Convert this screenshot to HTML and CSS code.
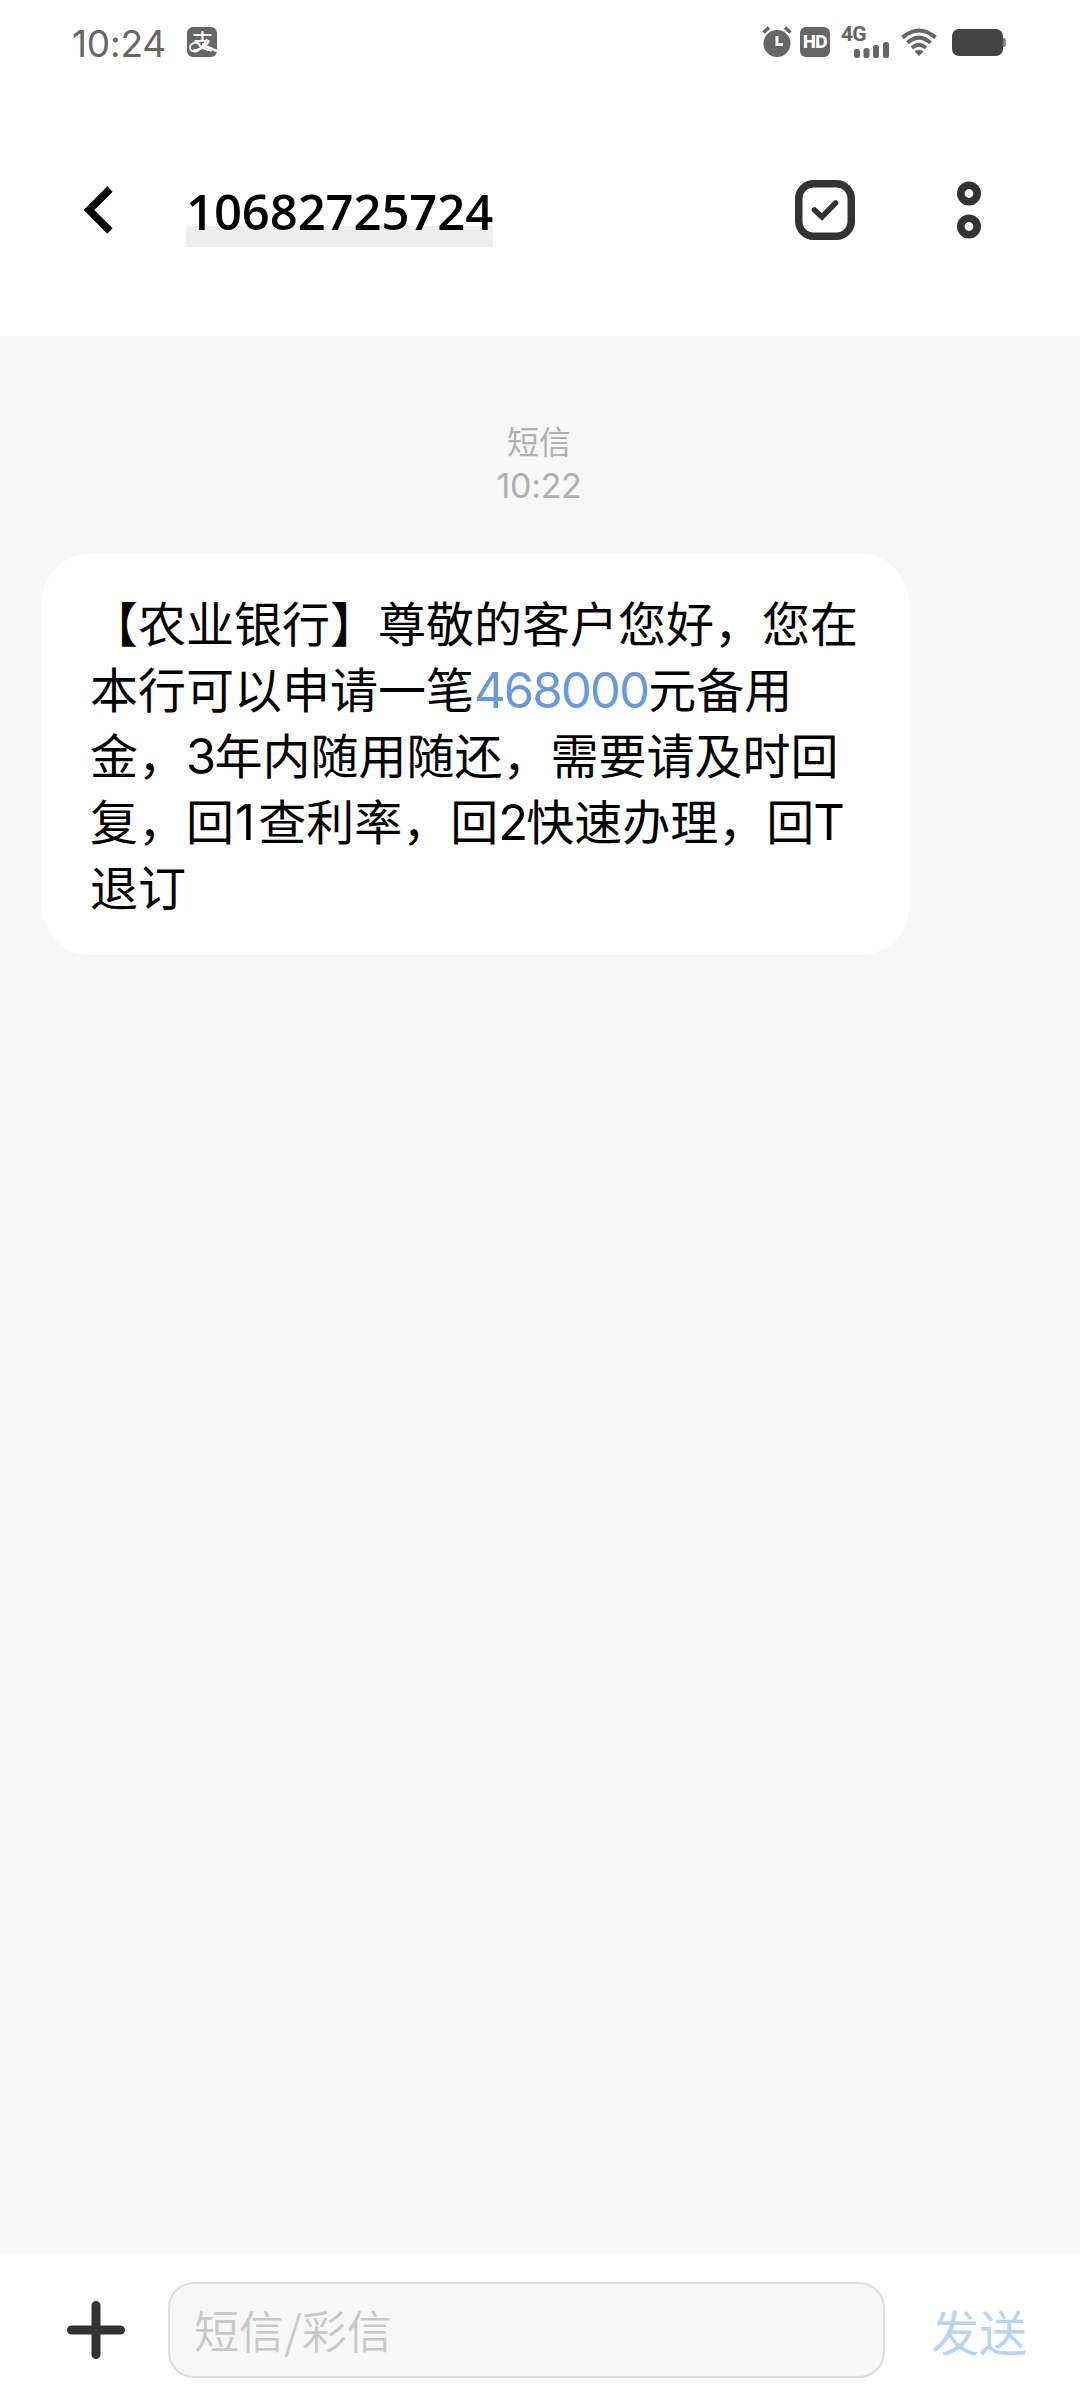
FILE: index.html
```html
<!doctype html>
<html lang='zh-CN'>

<head>
  <meta charset='utf-8'>
  <title>短信</title>
  <link rel="stylesheet" href="styles.css">
</head>

<body>
  <div class='phone'>
    <div class='statusbar'>
      <span class='clock'>10:24</span>
      <svg class='alipay' width='30' height='30' viewBox='0 0 30 30'>
        <rect width='30' height='30' rx='6' fill='#666'/>
        <text x='5' y='21.500' class='zhi'>支</text>
        <path d='M13 17C7 14 3 17 3 20.500C3 25 9 26 13 22C16 19 18.500 16 20 12' fill='none' stroke='#fff' stroke-width='1.800'/>
        <path d='M15 17.500L30 24' stroke='#fff' stroke-width='2.500'/>
      </svg>
      <div class='icons'>
        <svg class='alarm' width='30' height='32' viewBox='0 0 30 32'>
          <circle cx='15' cy='17.500' r='13.500' fill='#666'/>
          <path d='M1.500 6.500L7 1.500M28.500 6.500L23 1.500' stroke='#666' stroke-width='3.500'/>
          <path d='M15 10V18.500H21' fill='none' stroke='#fff' stroke-width='3'/>
        </svg>
        <span class='hd'>HD</span>
        <div class='signal'>
          <span class='net'>4G</span>
          <svg class='bars' width='35' height='17' viewBox='0 0 35 17'>
            <rect x='0' y='8' width='6' height='9' rx='2.500'/>
            <rect x='9.500' y='7' width='6' height='10' rx='2.500'/>
            <rect x='19' y='4' width='6' height='13' rx='2.500'/>
            <rect x='29' y='1' width='6' height='16' rx='2.500'/>
          </svg>
        </div>
        <svg class='wifi' width='36' height='28' viewBox='0 0 36 28'>
          <g fill='none' stroke='#666' stroke-width='4'>
            <path d='M1.500 9.500Q18 -4.500 34.500 9.500'/>
            <path d='M6.500 14.800Q18 4.500 29.500 14.800'/>
            <path d='M11 20Q18 13.500 25 20' stroke-width='3.600'/>
          </g>
          <path d='M13.500 23.500Q18 20 22.500 23.500L18 28Z' fill='#666'/>
        </svg>
        <svg class='battery' width='55' height='27' viewBox='0 0 55 27'>
          <rect x='49' y='9' width='5' height='9' rx='2' fill='#888'/>
          <rect width='51' height='27' rx='7' fill='#444'/>
        </svg>
      </div>
    </div>

    <div class='header'>
      <svg class='back' width='32' height='50' viewBox='0 0 32 50'>
        <path d='M28 4L7 25L28 46' fill='none' stroke='#000' stroke-width='7.500'/>
      </svg>
      <div class='title'>10682725724</div>
      <svg class='select' width='60' height='60' viewBox='0 0 60 60'>
        <rect x='3.750' y='3.750' width='52.500' height='52.500' rx='15' fill='none' stroke='#333' stroke-width='7.500'/>
        <path d='M19.500 30L27 37L40.500 23' fill='none' stroke='#333' stroke-width='5.500' stroke-linecap='round'/>
      </svg>
      <svg class='more' width='24' height='58' viewBox='0 0 24 58'>
        <g fill='none' stroke='#333' stroke-width='7.600'>
          <circle cx='12' cy='12.500' r='8.200'/>
          <circle cx='12' cy='45.500' r='8.200'/>
        </g>
      </svg>
    </div>

    <div class='messages'>
      <div class='date'>短信<br><span class='time'>10:22</span></div>
      <div class='bubble'>【农业银行】尊敬的客户您好，您在<br>本行可以申请一笔<span class='num link'>468000</span>元备用<br>金，<span class='num'>3</span>年内随用随还，需要请及时回<br>复，回<span class='num one'>1</span>查利率，回<span class='num'>2</span>快速办理，回<span class='num tee'>T</span><br>退订</div>
    </div>

    <div class='composer'>
      <svg class='add' width='58' height='58' viewBox='0 0 58 58'>
        <path d='M29 4.500V53.500M4.500 29H53.500' stroke='#333' stroke-width='9' stroke-linecap='round'/>
      </svg>
      <div class='input'>短信/彩信</div>
      <div class='send'>发送</div>
    </div>
  </div>
</body>

</html>
```
FILE: styles.css
```css
* {
  margin: 0;
  padding: 0;
  box-sizing: border-box;
}
body {
  font-family: "Noto Sans CJK SC", sans-serif;
  background: #fff;
}
svg {
  display: block;
  flex: none;
}
.phone {
  display: flex;
  flex-direction: column;
  width: 1080px;
  height: 2408px;
  overflow: hidden;
}
.statusbar {
  display: flex;
  align-items: center;
  height: 84px;
  padding: 0 73px 0 72px;
}
.clock {
  width: 115px;
  font: 400 37px/50px Inter, sans-serif;
  letter-spacing: -0.2px;
  color: #666;
  padding-top: 4px;
}
.zhi {
  font-size: 21px;
  font-weight: 500;
  fill: #fff;
}
.icons {
  display: flex;
  align-items: center;
  margin-left: auto;
}
.hd {
  width: 30px;
  height: 30px;
  margin-left: 8px;
  border-radius: 6px;
  background: #666;
  color: #fff;
  font: 800 17px/30px Inter, sans-serif;
  letter-spacing: -0.5px;
  text-align: center;
}
.signal {
  display: flex;
  flex-direction: column;
  width: 47px;
  height: 32px;
  margin-left: 11px;
}
.net {
  height: 15px;
  font: 700 21px/17px Roboto, sans-serif;
  letter-spacing: -0.8px;
  color: #666;
}
.bars {
  margin-left: 13px;
  fill: #666;
}
.wifi {
  margin-left: 13px;
}
.battery {
  margin-left: 15px;
}
.header {
  display: flex;
  align-items: center;
  height: 252px;
  padding: 0 99px 0 82px;
}
.title {
  width: 307px;
  height: 74px;
  margin-left: 72px;
  font: 600 49px/77px "Open Sans", sans-serif;
  letter-spacing: -0.1px;
  white-space: nowrap;
  background: linear-gradient(#eee, #eee) 0 53px / 307px 21px no-repeat;
}
.select {
  margin-left: auto;
}
.more {
  margin-left: 102px;
}
.messages {
  flex: 1;
  background: #f7f7f7;
  padding: 82px 42px 0;
}
.date {
  height: 136px;
  padding-right: 2px;
  font-size: 32px;
  line-height: 44px;
  text-align: center;
  color: #b0b0b0;
}
.time {
  font-family: Inter, sans-serif;
  font-size: 34px;
  letter-spacing: -0.3px;
}
.bubble {
  width: 867px;
  height: 401px;
  padding: 34px 0 0 48px;
  border-radius: 48px;
  background: #fff;
  font-size: 48px;
  line-height: 66px;
  white-space: nowrap;
  color: #000;
}
.num {
  font-family: Inter, sans-serif;
  font-size: 49px;
  line-height: 1;
  letter-spacing: -1.8px;
}
.one {
  margin: 0 5px 0 1px;
}
.tee {
  margin-left: -1px;
}
.link {
  color: #6699e0;
}
.composer {
  display: flex;
  align-items: center;
  height: 154px;
  padding: 0 53px 2px 67px;
}
.input {
  width: 717px;
  height: 96px;
  margin-left: 43px;
  padding-left: 24px;
  border: 2px solid #ddd;
  border-radius: 26px;
  background: #f7f7f7;
  font-size: 45px;
  font-weight: 350;
  line-height: 91px;
  color: #c8c8c8;
}
.send {
  margin-left: auto;
  font-size: 48px;
  line-height: 94px;
  color: #b9d3f5;
}
```
